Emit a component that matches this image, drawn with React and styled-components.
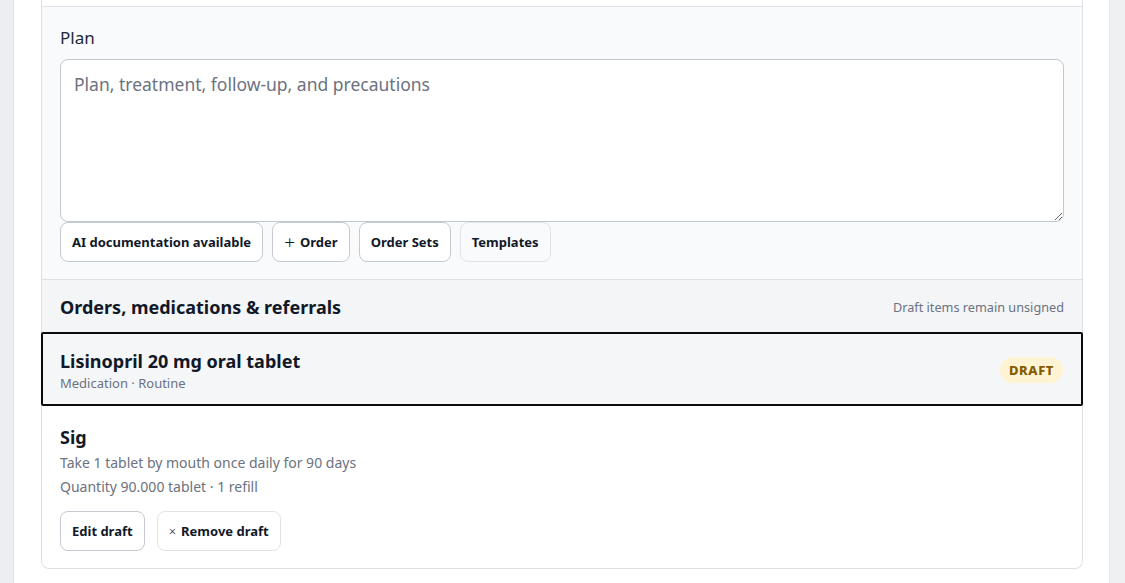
import styled, { createGlobalStyle } from "styled-components";

const GlobalStyle = createGlobalStyle`
  html, body {
    margin: 0;
    padding: 0;
    background: #eef0f3;
    font-family: "Noto Sans", "Open Sans", Arial, sans-serif;
    color: #111827;
  }
  * { box-sizing: border-box; }
`;

const Shell = styled.div`
  display: flex;
  min-height: 583px;
  background: #eef0f3;
`;

const Rail = styled.div`
  width: 14px;
  border-right: 1px solid #e1e4e8;
  background: #eceef1;
`;

const Main = styled.main`
  flex: 1;
  background: #ffffff;
  padding: 0 26px 14px 27px;
`;

const Gutter = styled.div`
  width: 16px;
  background: #eff0f2;
  border-left: 1px solid #e6e8eb;
`;

const Card = styled.section`
  border: 1px solid #dde1e6;
  border-top: none;
  border-radius: 0 0 8px 8px;
  background: #ffffff;
`;

const PrevSection = styled.div`
  height: 7px;
  border-bottom: 1px solid #dde1e6;
`;

const PlanSection = styled.div`
  background: #f9fafb;
  padding: 19px 18px 17px;
  border-bottom: 1px solid #dde1e6;
`;

const Label = styled.label`
  display: block;
  font-size: 17px;
  line-height: 24px;
  color: #1f2937;
  margin-bottom: 9px;
`;

const PlanInput = styled.textarea`
  display: block;
  width: 100%;
  height: 163px;
  padding: 11px 13px 12px;
  border: 1px solid #c3c8cf;
  border-radius: 8px;
  background: #ffffff;
  font-family: inherit;
  font-size: 17.5px;
  line-height: 26px;
  color: #111827;
  resize: vertical;
  outline: none;
  &::placeholder {
    color: #6b7280;
  }
`;

const ButtonRow = styled.div`
  display: flex;
  gap: ${(p) => p.$gap || 9}px;
  margin-top: ${(p) => p.$top || 0}px;
`;

const Button = styled.button`
  display: inline-flex;
  align-items: center;
  gap: 5px;
  height: 40px;
  padding: 0 11px;
  border: 1px solid ${(p) => (p.$soft ? "#dfe3e8" : "#c5cad1")};
  border-radius: 8px;
  background: ${(p) => (p.$tint ? "#f8fafc" : "#ffffff")};
  font-family: inherit;
  font-size: 13px;
  font-weight: 700;
  color: #111827;
  cursor: pointer;
`;

const Glyph = styled.span`
  font-weight: 300;
  font-size: ${(p) => p.$size || 19}px;
  line-height: 1;
`;

const OrdersHeader = styled.div`
  display: flex;
  align-items: center;
  justify-content: space-between;
  height: 52px;
  padding: 1px 18px 0;
  background: #f4f5f7;
`;

const SectionTitle = styled.h3`
  margin: 0;
  font-size: 18px;
  line-height: 24px;
  font-weight: 700;
  color: #111827;
`;

const Note = styled.span`
  font-size: 12.7px;
  color: #6b7280;
`;

const OrderItem = styled.div`
  display: flex;
  align-items: center;
  justify-content: space-between;
  margin: 0 -1px;
  padding: 15px 18px 11px 17px;
  border: 2px solid #0b0b0c;
  border-radius: 2px;
  background: #f5f6f8;
`;

const ItemMeta = styled.div`
  color: #6b7280;
  font-size: 13px;
  line-height: 20px;
`;

const Badge = styled.span`
  display: inline-flex;
  align-items: center;
  height: 26px;
  margin-bottom: 3px;
  padding: 0 9px;
  border-radius: 13px;
  background: #fef4d3;
  color: #865a00;
  font-size: 13px;
  font-weight: 800;
  letter-spacing: 0.6px;
`;

const SigSection = styled.div`
  padding: 19px 18px 17px;
`;

const SigLine = styled.div`
  margin-top: ${(p) => p.$top || 0}px;
  font-size: 14px;
  line-height: 24px;
  color: #6b7280;
`;

export default function App() {
  return (
    <>
      <GlobalStyle />
      <Shell>
        <Rail />
        <Main>
          <Card>
            <PrevSection />
            <PlanSection>
              <Label htmlFor="plan">Plan</Label>
              <PlanInput
                id="plan"
                placeholder="Plan, treatment, follow-up, and precautions"
              />
              <ButtonRow>
                <Button>AI documentation available</Button>
                <Button>
                  <Glyph>+</Glyph>Order
                </Button>
                <Button>Order Sets</Button>
                <Button $soft $tint>
                  Templates
                </Button>
              </ButtonRow>
            </PlanSection>
            <OrdersHeader>
              <SectionTitle>Orders, medications &amp; referrals</SectionTitle>
              <Note>Draft items remain unsigned</Note>
            </OrdersHeader>
            <OrderItem>
              <div>
                <SectionTitle>Lisinopril 20 mg oral tablet</SectionTitle>
                <ItemMeta>Medication · Routine</ItemMeta>
              </div>
              <Badge>DRAFT</Badge>
            </OrderItem>
            <SigSection>
              <SectionTitle>Sig</SectionTitle>
              <SigLine $top={2}>Take 1 tablet by mouth once daily for 90 days</SigLine>
              <SigLine>Quantity 90.000 tablet · 1 refill</SigLine>
              <ButtonRow $gap={12} $top={12}>
                <Button>Edit draft</Button>
                <Button $soft>
                  <Glyph $size={13}>×</Glyph>Remove draft
                </Button>
              </ButtonRow>
            </SigSection>
          </Card>
        </Main>
        <Gutter />
      </Shell>
    </>
  );
}
